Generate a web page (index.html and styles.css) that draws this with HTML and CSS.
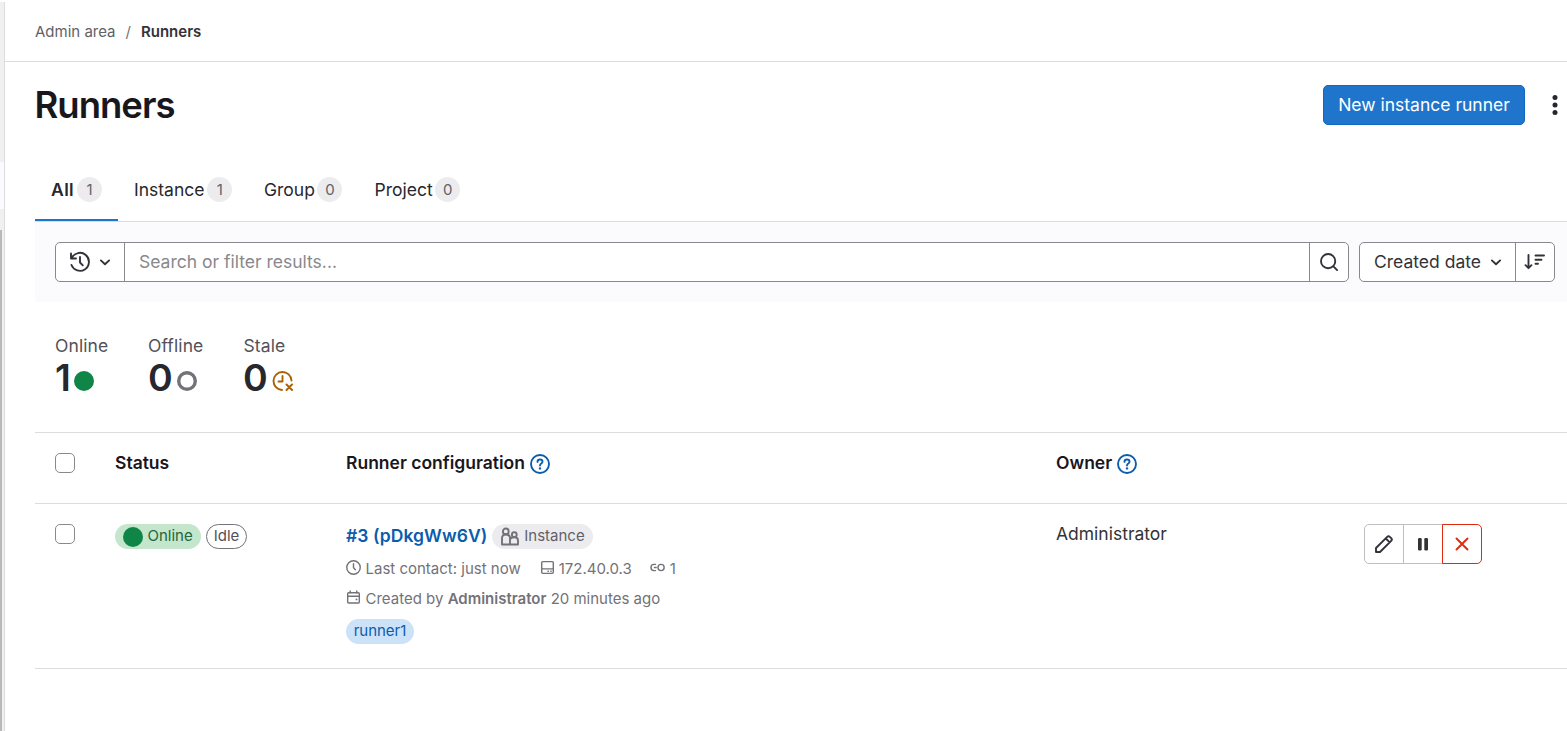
FILE: index.html
```html
<!DOCTYPE html>
<html lang="en">
<head>
<meta charset="utf-8">
<title>Runners</title>
<link rel="stylesheet" href="styles.css">
</head>
<body>
<svg class="defs" width="0" height="0">
  <symbol id="chevron" viewBox="0 0 16 16"><path d="M4.700 6.700 8 9.800l3.300-3.100" class="ln"/></symbol>
  <symbol id="help" viewBox="0 0 16 16"><circle cx="8" cy="8" r="7.200" class="ln"/><path d="M6 6.300C6 5 6.900 4.400 8 4.400s2 .700 2 1.800C10 7.700 8 7.600 8 9.200" class="ln"/><circle cx="8" cy="11.500" r=".95" class="fl"/></symbol>
</svg>
<div class="app">
  <aside class="sidebar"><div class="sidebar-item"></div><div class="scrollbar"></div></aside>
  <main class="main">
    <nav class="crumbs"><span>Admin area</span><span class="slash">/</span><b>Runners</b></nav>
    <div class="content">
      <header class="head">
        <h1>Runners</h1>
        <div class="head-actions">
          <button class="primary"><span>New instance runner</span></button>
          <svg class="kebab" width="20" height="20" viewBox="0 0 20 20"><circle cx="10" cy="2.500" r="2.500"/><circle cx="10" cy="10" r="2.500"/><circle cx="10" cy="17.500" r="2.500"/></svg>
        </div>
      </header>
      <div class="tabs">
        <div class="tab active"><span>All</span><i>1</i></div>
        <div class="tab t2"><span>Instance</span><i>1</i></div>
        <div class="tab t3"><span>Group</span><i>0</i></div>
        <div class="tab"><span>Project</span><i>0</i></div>
      </div>
      <div class="filter">
        <div class="group search">
          <div class="history">
            <svg class="bold" width="22" height="22" viewBox="0 0 22 22"><path d="M2 2.500v5h5M2.800 7A9 9 0 1 1 2.500 14M11 6v5.500l2.800 2.800" class="ln"/></svg>
            <svg width="20" height="20"><use href="#chevron"/></svg>
          </div>
          <div class="field">Search or filter results...</div>
          <div class="go"><svg width="20" height="20" viewBox="0 0 16 16"><circle cx="7.300" cy="7.300" r="5.700" class="ln"/><path d="m11.500 11.500 3 3" class="ln"/></svg></div>
        </div>
        <div class="group sort">
          <div class="sort-by"><span>Created date</span><svg width="20" height="20"><use href="#chevron"/></svg></div>
          <div class="sort-dir"><svg class="bold" width="22" height="20" viewBox="0 0 22 20"><path d="M4.500 3v13M1.500 13.200l3 3 3-3M11.500 3.500h8.500M11.500 7.700h6M11.500 11.700h2.500" class="ln"/></svg></div>
        </div>
      </div>
      <div class="stats">
        <div class="stat s1"><p>Online</p><div><b>1</b><svg width="20" height="20" viewBox="0 0 20 20"><circle cx="10" cy="10" r="10" fill="#108548"/></svg></div></div>
        <div class="stat s2"><p>Offline</p><div><b>0</b><svg width="20" height="20" viewBox="0 0 20 20"><circle cx="10" cy="10" r="8.300" fill="none" stroke="#737278" stroke-width="3.400"/></svg></div></div>
        <div class="stat s3"><p>Stale</p><div><b>0</b><svg class="stale bold" width="22" height="20" viewBox="0 0 22 20"><path d="M19.500 9.500A9 9 0 1 0 10 19M10.500 5V10.500H6.500M14.500 13.500l5.500 5.500M20 13.500l-5.500 5.500" class="ln"/></svg></div></div>
      </div>
      <div class="table">
        <div class="row thead">
          <div class="check"><span class="box"></span></div>
          <div>Status</div>
          <div class="with-help"><span class="rc">Runner configuration</span><svg width="20" height="20"><use href="#help"/></svg></div>
          <div class="with-help"><span>Owner</span><svg width="20" height="20"><use href="#help"/></svg></div>
          <div></div>
        </div>
        <div class="row tbody">
          <div class="check"><span class="box"></span></div>
          <div class="status">
            <span class="pill online"><svg width="20" height="20"><circle cx="10" cy="10" r="10" fill="#108548"/></svg><span>Online</span></span>
            <span class="pill idle"><span>Idle</span></span>
          </div>
          <div class="config">
            <div class="title"><a>#3 (pDkgWw6V)</a><span class="pill instance"><svg class="bold" width="20" height="20" viewBox="0 0 20 20"><path d="M10 17.500H2V11c0-2.200 1.300-3.500 3.800-3.500S10 8.800 10 11v6.500h8V13.300c0-1.900-1.300-3-3.600-3s-4.400 1-4.400 3" class="ln"/><circle cx="5.800" cy="4.400" r="2.900" class="ln"/><circle cx="14.300" cy="7.700" r="2.400" class="ln"/></svg><span>Instance</span></span></div>
            <div class="meta">
              <svg width="15" height="15" viewBox="0 0 16 16"><circle cx="8" cy="8" r="7.200" class="ln"/><path d="M8 4v4.300l2 2" class="ln"/></svg><span class="m1">Last contact: just now</span>
              <svg width="15" height="15" viewBox="0 0 16 16"><rect x="1.800" y="1.700" width="12.400" height="12.600" rx="1.200" class="ln"/><path d="M2 9.500h12" class="ln"/><path d="M8 11.200h1.500v1.500H8zM11 11.200h1.500v1.500H11z" class="fl"/></svg><span class="m2">172.40.0.3</span>
              <svg width="15" height="15" viewBox="0 0 16 16"><path d="M5.800 4.700H4.300a3.300 3.300 0 0 0 0 6.600h1.500M4.800 8h1.800" class="ln"/><circle cx="11.800" cy="8" r="3.300" class="ln"/></svg><span>1</span>
            </div>
            <div class="meta second">
              <svg width="15" height="15" viewBox="0 0 16 16"><rect x="1.800" y="3" width="12.400" height="10.800" rx="1" class="ln"/><path d="M1.800 6.600h12.400M4.500 1v2M11.500 1v2" class="ln"/><circle cx="11.200" cy="10" r="1" class="fl"/></svg><span class="m3">Created by <b>Administrator</b> 20 minutes ago</span>
            </div>
            <span class="pill tag"><span>runner1</span></span>
          </div>
          <div class="owner">Administrator</div>
          <div class="actions">
            <button><svg class="bold" width="20" height="20" viewBox="0 0 20 20"><path d="M2 18v-4L13.200 2.800c.8-.8 1.800-.8 2.600 0l1.400 1.400c.8.800.8 1.800 0 2.600L6 18zM11.800 4.500l3.700 3.700" class="ln"/></svg></button>
            <button><svg width="20" height="20" viewBox="0 0 20 20"><rect x="5" y="4" width="3.700" height="12.500" rx="1.200" class="fl"/><rect x="11.300" y="4" width="3.700" height="12.500" rx="1.200" class="fl"/></svg></button>
            <button class="danger"><svg class="bold" width="20" height="20" viewBox="0 0 20 20"><path d="m4.500 4.500 11 11M15.500 4.500l-11 11" class="ln"/></svg></button>
          </div>
        </div>
      </div>
    </div>
  </main>
</div>
</body>
</html>
```
FILE: styles.css
```css
* { box-sizing: border-box; }
body { margin: 0; background: #fff; color: #333238; font: 17.500px/25px Inter, "Liberation Sans", sans-serif; overflow: hidden; }
svg { display: block; flex: none; }
.defs { position: absolute; }
.ln { fill: none; stroke: currentColor; stroke-width: 1.500; stroke-linecap: round; stroke-linejoin: round; }
.bold .ln { stroke-width: 1.900; }
.fl { fill: currentColor; }
h1, p { margin: 0; }
b { font-weight: 600; }
button { font: inherit; padding: 0; }
span, b, a { white-space: nowrap; }
.app { display: flex; width: 1567px; height: 731px; }
.sidebar { width: 5px; margin-top: 2px; background: #f0f0f1; border-right: 1px solid #dcdcde; padding-top: 160px; }
.sidebar-item { height: 47px; background: #fbfafd; }
.scrollbar { width: 2px; height: 501px; margin-top: 21px; background: #b9b9ba; }
.main { flex: 1; min-width: 0; }
.crumbs { display: flex; align-items: center; height: 62px; padding: 1px 0 0 30px; border-bottom: 1px solid #dcdcde; font-size: 15px; color: #626168; }
.crumbs b { color: #333238; }
.slash { margin: 0 10px; color: #737278; }
.content { padding-left: 30px; }
.head { display: flex; justify-content: space-between; height: 96px; padding-top: 23px; }
h1 { font-size: 36.500px; line-height: 40px; font-weight: 600; letter-spacing: -1px; margin-left: -.5px; color: #18171d; }
.head-actions { display: flex; height: 40px; align-items: center; gap: 20px; }
.primary { width: 202px; height: 40px; padding-bottom: 2px; border: 1px solid #1068bf; border-radius: 5px; background: #1f75cb; color: #fff; }
.kebab { fill: #28272d; margin-right: 2px; }
.tabs { display: flex; height: 64px; border-bottom: 1px solid #dcdcde; }
.tab { display: flex; align-items: center; gap: 3px; height: 63px; padding: 0 16px; color: #28272d; }
.tab i { width: 25px; height: 25px; border-radius: 13px; background: #ececef; color: #626168; font-size: 15px; font-style: normal; text-align: center; }
.tab.active { width: 83px; gap: 3px; font-weight: 600; border-bottom: 2px solid #1f75cb; padding-top: 2px; }
.tab.active span { letter-spacing: .4px; }
.tab.active i { font-weight: 400; }
.t2 { width: 130px; }
.t3 { width: 110.500px; }
.t3 ~ .tab, .t3 { gap: 2.500px; }
.filter { display: flex; gap: 10px; height: 80px; padding: 20px 12px 20px 20px; background: #fbfafd; }
.group { display: flex; height: 40px; border: 1px solid #89888d; border-radius: 5px; background: #fff; color: #333238; }
.search { width: 1294px; }
.history { display: flex; align-items: center; width: 69px; padding-left: 13px; gap: 4px; border-right: 1px solid #89888d; }
.field { flex: 1; padding: 6px 14px; color: #89888d; }
.go, .sort-dir { display: grid; place-items: center; width: 39px; border-left: 1px solid #89888d; }
.sort { width: 196px; }
.sort-by { flex: 1; display: flex; align-items: center; gap: 5px; padding-left: 14px; }
.sort-by span { padding-bottom: 2px; }
.stats { display: flex; height: 130px; padding: 31px 20px; }
.stat { color: #535158; }
.stat p { letter-spacing: .1px; }
.stat div { display: flex; align-items: center; height: 38px; }
.stat b { font-size: 37.500px; line-height: 38px; padding-top: 2px; color: #28272d; }
.stat svg { margin-top: 7px; }
.s1 { width: 93px; }
.s2 { width: 95.500px; }
.s1 svg { margin-left: 3px; }
.s2 svg { margin-left: 4px; }
.s3 b { margin-left: -.5px; }
.s3 svg { margin-left: 4px; }
.stale { color: #ab6100; }
.row { display: grid; grid-template-columns: 80px 231px 710px 308px 1fr; border-top: 1px solid #dcdcde; }
.thead { height: 71px; padding-top: 17px; font-weight: 600; color: #18171d; }
.check { padding: 3px 0 0 20px; }
.box { display: block; width: 20px; height: 20px; border: 1px solid #89888d; border-radius: 5px; }
.with-help { display: flex; gap: 5px; }
.with-help svg { color: #0b5cad; margin-top: 4px; }
.tbody { height: 166px; padding-top: 17px; border-bottom: 1px solid #dcdcde; }
.status { display: flex; gap: 5px; padding-top: 3px; }
.pill { display: inline-flex; align-items: center; height: 25px; border-radius: 13px; font-size: 15px; }
.pill span { padding-bottom: 2px; }
.online { width: 86px; padding-left: 8px; gap: 4.500px; background: #c3e6cd; color: #24663b; }
.idle { width: 41px; justify-content: center; border: 1px solid #737278; color: #535158; }
.title { display: flex; gap: 5px; height: 25px; margin-top: 3px; }
.title a { margin-top: -1px; font-weight: 600; color: #0b5cad; letter-spacing: .05px; }
.instance { width: 101px; padding-left: 8px; gap: 4px; background: #ececef; color: #626168; }
.instance svg { color: #737278; }
.meta { display: flex; align-items: center; height: 20px; margin-top: 9px; gap: 4.500px; font-size: 15px; color: #737278; }
.meta svg { margin-top: -1px; }
.second { margin-top: 10px; }
.m1 { margin-right: 14.500px; }
.m2 { margin-right: 14px; margin-left: -.5px; }
.tag { width: 68px; margin-top: 11px; justify-content: center; background: #cbe2f9; color: #0b5cad; }
.actions { display: flex; margin-top: 3px; }
.actions button { display: grid; place-items: center; width: 40px; height: 40px; border: 1px solid #bfbfc3; background: #fff; color: #333238; margin-right: -1px; }
.actions button:first-child { border-radius: 5px 0 0 5px; }
.actions .danger { border-color: #dd2b0e; color: #dd2b0e; border-radius: 0 5px 5px 0; }
```
